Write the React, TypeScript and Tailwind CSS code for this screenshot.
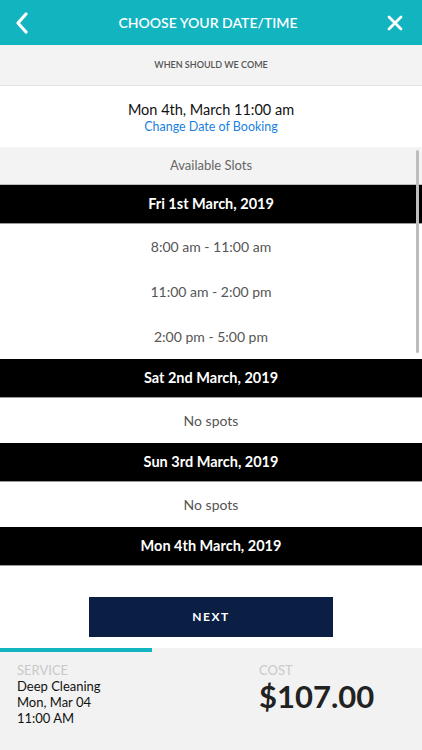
const DAYS = [
  { label: "Fri 1st March, 2019", slots: ["8:00 am - 11:00 am", "11:00 am - 2:00 pm", "2:00 pm - 5:00 pm"] },
  { label: "Sat 2nd March, 2019", slots: ["No spots"] },
  { label: "Sun 3rd March, 2019", slots: ["No spots"] },
  { label: "Mon 4th March, 2019", slots: [] as string[] },
];

export default function App() {
  return (
    <div className="w-[422px] h-[750px] flex flex-col bg-white overflow-hidden" style={{ fontFamily: "Lato, 'Open Sans', sans-serif" }}>
      {/* header */}
      <div className="h-[45px] bg-[#12b4c0] flex items-center justify-between px-[14px] shrink-0">
        <svg width="16" height="22" viewBox="0 0 16 22" fill="none">
          <path d="M12 2 L4 11 L12 20" stroke="white" strokeWidth="3.2" strokeLinecap="round" strokeLinejoin="round" />
        </svg>
        <h1 className="text-white text-[14px] font-semibold">CHOOSE YOUR DATE/TIME</h1>
        <svg width="18" height="18" viewBox="0 0 18 18" fill="none" className="mr-[4px]">
          <path d="M3 3 L15 15 M15 3 L3 15" stroke="white" strokeWidth="2.8" strokeLinecap="round" />
        </svg>
      </div>

      <div className="h-[41px] bg-[#f3f3f3] border-b border-[#e2e2e2] flex items-center justify-center shrink-0">
        <span className="text-[9px] text-[#555] font-semibold">WHEN SHOULD WE COME</span>
      </div>

      <div className="h-[61px] flex flex-col items-center justify-center shrink-0 pt-[2px]">
        <span className="text-[14.5px] text-[#111] leading-[19px]">Mon 4th, March 11:00 am</span>
        <span className="text-[12.5px] text-[#1a7fe0] leading-[16px]">Change Date of Booking</span>
      </div>

      {/* slots list */}
      <div className="relative h-[433px] shrink-0">
        <div className="h-[38px] bg-[#f3f3f3] border-b border-[#bdbdbd] flex items-center justify-center">
          <span className="text-[13px] text-[#666]">Available Slots</span>
        </div>
        {DAYS.map((d) => (
          <div key={d.label}>
            <div className="h-[39px] bg-black border-b border-[#999] flex items-center justify-center">
              <span className="text-white text-[14.5px] font-bold">{d.label}</span>
            </div>
            {d.slots.map((s) => (
              <div key={s} className="h-[45px] flex items-center justify-center">
                <span className="text-[14px] text-[#555]">{s}</span>
              </div>
            ))}
          </div>
        ))}
        <div className="absolute right-[3px] top-[3px] w-[3px] h-[203px] rounded-full bg-[#bdbdbd]" />
      </div>

      <div className="flex-1 flex flex-col">
        <div className="flex justify-center pt-[17px]">
          <button className="w-[244px] h-[40px] bg-[#0b1f45] text-white text-[12px] font-bold tracking-[1.5px]">NEXT</button>
        </div>
        <div className="mt-[11px] h-[4px] bg-[#f2f2f2]">
          <div className="h-full w-[152px] bg-[#12b4c0]" />
        </div>
        <div className="flex-1 bg-[#f2f2f2] flex px-[17px] pt-[10px]">
          <div className="w-[242px] flex flex-col">
            <span className="text-[13px] text-[#c9c9c9] leading-[16px]">SERVICE</span>
            <span className="text-[13px] text-[#111] leading-[16px]">Deep Cleaning</span>
            <span className="text-[13px] text-[#111] leading-[16px]">Mon, Mar 04</span>
            <span className="text-[13px] text-[#111] leading-[16px]">11:00 AM</span>
          </div>
          <div className="flex flex-col">
            <span className="text-[13px] text-[#c9c9c9] leading-[16px]">COST</span>
            <span className="text-[31px] font-bold text-[#222] leading-[32px] mt-[2px]">$107.00</span>
          </div>
        </div>
      </div>
    </div>
  );
}
